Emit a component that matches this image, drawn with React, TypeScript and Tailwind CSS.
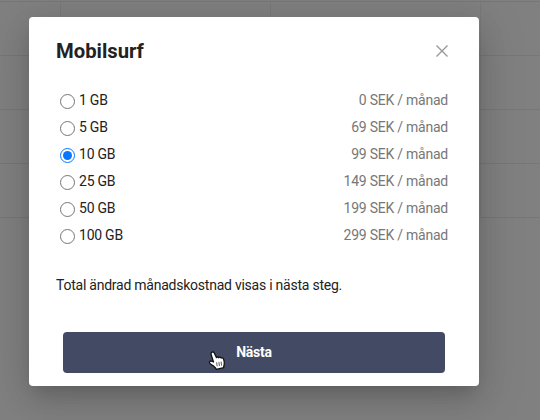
import { useState } from "react"

type SurfOption = {
  id: string
  label: string
  price: number
}

const options: SurfOption[] = [
  { id: "1", label: "1 GB", price: 0 },
  { id: "5", label: "5 GB", price: 69 },
  { id: "10", label: "10 GB", price: 99 },
  { id: "25", label: "25 GB", price: 149 },
  { id: "50", label: "50 GB", price: 199 },
  { id: "100", label: "100 GB", price: 299 },
]

function TableBackdrop() {
  return (
    <div className="pt-px">
      {[0, 1, 2, 3].map(row => (
        <div
          key={row}
          className="grid h-[54px] grid-cols-[61px_210px_210px_59px] divide-x divide-[#797979] border-t border-[#777]"
        >
          <div />
          <div />
          <div />
          <div />
        </div>
      ))}
      <div className="border-t border-[#777]" />
    </div>
  )
}

function HandCursor() {
  return (
    <svg
      className="pointer-events-none absolute top-[334px] left-[179px] h-[20px] w-[18px]"
      viewBox="0 0 18 20"
      fill="none"
    >
      <path
        d="M4 1.200c1-.5 2 .1 2.400 1l2 4.400c.4-.8 1.900-.8 2.300.1.500-.8 2-.6 2.400.4.700-.6 2-.2 2.400.8.6 1.800 1 3.600.7 5.400-.2 1.300-.6 2.200-.5 3.400l-7.400 1.600c-.6-1.600-2-2.600-3.400-3.700-1.500-1-2.700-1.600-3.300-2.600-.6-1.300.7-2.400 2-1.800l1.900.8L3.100 3.400c-.3-.9 0-1.800.9-2.200z"
        fill="#fff"
        stroke="#111"
        strokeWidth="1.300"
        strokeLinejoin="round"
      />
      <path d="M8.600 11.300l.6 4M10.900 10.900l.5 4M13.100 10.600l.5 4" stroke="#444" strokeWidth=".9" />
    </svg>
  )
}

export default function App() {
  const [selected, setSelected] = useState("10")

  return (
    <div className="relative h-[420px] w-[540px] overflow-hidden bg-[#808080] font-['Roboto','Noto_Sans',sans-serif] text-[#222]">
      <TableBackdrop />

      <div className="absolute top-[17px] left-[29px] h-[369px] w-[450px] rounded bg-white shadow-[0_11px_15px_-7px_rgba(0,0,0,0.12),0_9px_46px_8px_rgba(0,0,0,0.1),0_12px_30px_0px_rgba(0,0,0,0.1)]">
        <div className="flex items-center justify-between pt-5 pr-[31px] pl-[27px]">
          <h1 className="text-[20.25px] leading-7 font-bold">Mobilsurf</h1>
          <button aria-label="Stäng" className="text-[#999]">
            <svg className="h-3 w-3" viewBox="0 0 12 12" stroke="currentColor" strokeWidth="1.400">
              <path d="M.5.5l11 11M11.500.5l-11 11" />
            </svg>
          </button>
        </div>

        <div className="mt-[22px] pr-[31px] pl-[31px] text-sm tracking-[-0.24px]">
          {options.map(option => (
            <label key={option.id} className="flex h-[27px] items-start pt-[3px] leading-5">
              <input
                type="radio"
                name="surf"
                checked={selected === option.id}
                onChange={() => setSelected(option.id)}
                className="peer sr-only"
              />
              <span className="mt-[4px] flex h-[15px] w-[15px] items-center justify-center rounded-full border border-[#767676] peer-checked:border-[#0a75ff] peer-checked:[&>span]:bg-[#0a75ff]">
                <span className="h-[9px] w-[9px] rounded-full" />
              </span>
              <span className="ml-[4px]">{option.label}</span>
              <span className="ml-auto text-[#777]">{option.price} SEK / månad</span>
            </label>
          ))}
        </div>

        <p className="mt-[26px] pl-[27px] text-sm leading-5 tracking-[-0.24px]">
          Total ändrad månadskostnad visas i nästa steg.
        </p>

        <div className="mt-[37px] px-[34px]">
          <button className="h-[41px] w-full rounded bg-[#434a63] pb-[2px] text-sm font-bold tracking-[-0.24px] text-white">
            Nästa
          </button>
        </div>

        <HandCursor />
      </div>
    </div>
  )
}
